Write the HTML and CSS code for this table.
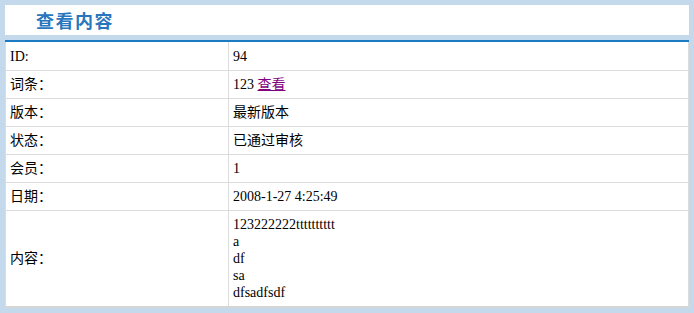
FILE: index.html
```html
<!DOCTYPE html>
<html lang="zh-CN">
<head>
<meta charset="utf-8">
<title>查看内容</title>
<link rel="stylesheet" href="styles.css">
</head>
<body>
<div class="panel">
  <div class="title-bar"><h2 class="title">查看内容</h2></div>
  <table class="detail">
    <tr class="first"><td class="label">ID:</td><td>94</td></tr>
    <tr><td class="label">词条：</td><td>123 <a href="#" class="link">查看</a></td></tr>
    <tr><td class="label">版本：</td><td>最新版本</td></tr>
    <tr><td class="label">状态：</td><td>已通过审核</td></tr>
    <tr><td class="label">会员：</td><td>1</td></tr>
    <tr><td class="label">日期：</td><td>2008-1-27 4:25:49</td></tr>
    <tr><td class="label">内容：</td><td>123222222tttttttttt<br>a<br>df<br>sa<br>dfsadfsdf</td></tr>
  </table>
</div>
</body>
</html>
```
FILE: styles.css
```css
html, body {
  margin: 0;
  padding: 0;
}

body {
  background: #c5d9ed;
  padding: 5px;
  font-family: "Liberation Serif", "Noto Sans CJK SC", serif;
  font-size: 14px;
  color: #000;
}

.panel {
  display: flex;
  flex-direction: column;
  gap: 5px;
}

.title-bar {
  background: #fff;
  height: 30px;
  display: flex;
  align-items: center;
  padding-left: 31px;
}

.title {
  margin: 0;
  font-family: "Noto Sans CJK SC", sans-serif;
  font-size: 18px;
  font-weight: bold;
  color: #2a76bd;
  letter-spacing: 1.5px;
  line-height: 1;
}

.detail {
  width: 100%;
  border-collapse: collapse;
  background: #fff;
  border: 1px solid #dcdcdc;
  border-top: 2px solid #1b7bc2;
  border-bottom: 2px solid #d6d6d6;
}

.detail td {
  border: 1px solid #dcdcdc;
  padding: 5px 4px;
  line-height: 17px;
  vertical-align: middle;
}

.detail .first td {
  padding-top: 6px;
}

.detail .label {
  width: 214px;
}

.link {
  color: #800080;
  text-decoration: underline;
}
```
